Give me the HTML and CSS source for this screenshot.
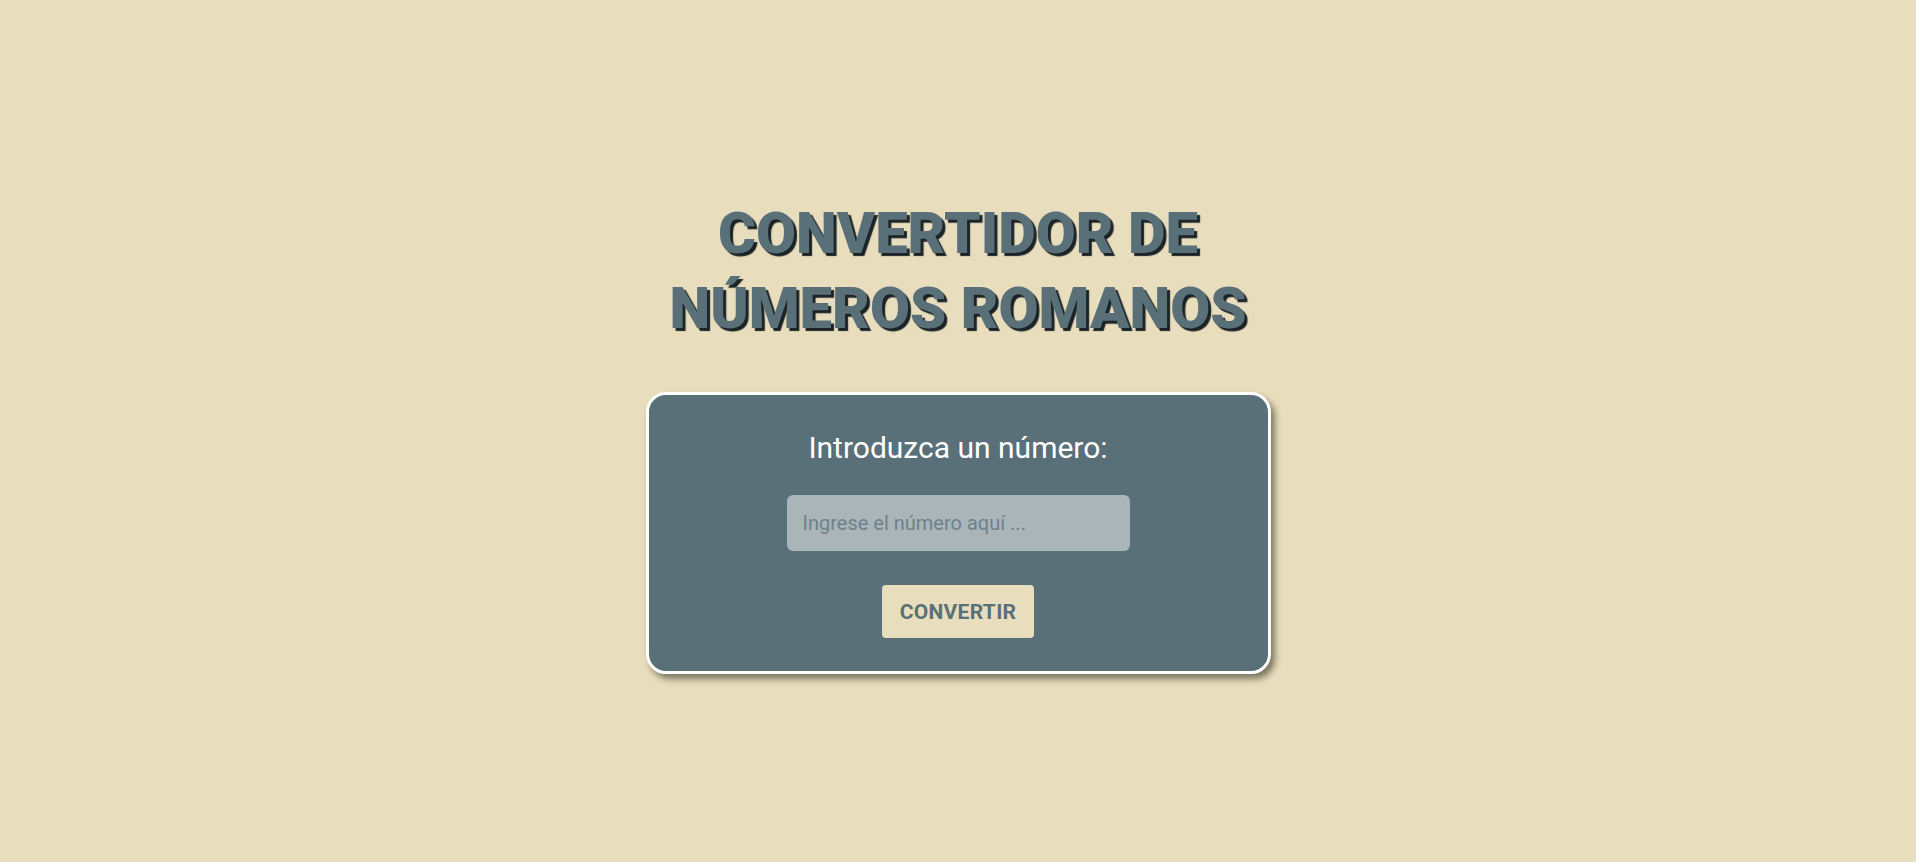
FILE: index.html
```html
<!DOCTYPE html>
<html lang="es">
<head>
<meta charset="utf-8">
<title>Convertidor de números romanos</title>
<link rel="stylesheet" href="styles.css">
</head>
<body>
<main class="page">
  <h1 class="title">CONVERTIDOR DE<br>NÚMEROS ROMANOS</h1>
  <form class="card">
    <label class="label" for="num">Introduzca un número:</label>
    <input class="field" id="num" type="text" placeholder="Ingrese el número aquí ...">
    <button class="btn" type="button">CONVERTIR</button>
  </form>
</main>
</body>
</html>
```
FILE: styles.css
```css
* { box-sizing: border-box; }
html, body { margin: 0; padding: 0; }
body {
  background: #e8ddbc;
  font-family: Roboto, "Liberation Sans", sans-serif;
}
.page {
  min-height: 100vh;
  display: flex;
  flex-direction: column;
  align-items: center;
  justify-content: center;
  padding-top: 8px;
}
.title {
  margin: 0 0 46px;
  font-family: Roboto, "Liberation Sans", sans-serif;
  font-weight: 900;
  font-size: 58px;
  line-height: 75px;
  letter-spacing: 0px;
  text-align: center;
  color: #5a7078;
  text-shadow: 3px 3px 1px #1b2326;
}
.card {
  width: 625px;
  background: #5a7078;
  border: 3px solid #ffffff;
  border-radius: 20px;
  box-shadow: 4px 5px 6px rgba(40, 40, 30, 0.55);
  display: flex;
  flex-direction: column;
  align-items: center;
  padding: 36px 20px 33px;
}
.label {
  color: #ffffff;
  font-size: 30px;
  font-weight: 400;
  line-height: 34px;
  margin-bottom: 30px;
}
.field {
  width: 343px;
  height: 56px;
  border: none;
  border-radius: 6px;
  background: #aab5ba;
  padding: 0 16px;
  font-family: Roboto, "Liberation Sans", sans-serif;
  font-size: 20px;
  color: #33444b;
  outline: none;
  margin-bottom: 34px;
}
.field::placeholder { color: #6f8189; }
.btn {
  width: 152px;
  height: 53px;
  border: none;
  border-radius: 4px;
  background: #e8ddbc;
  color: #5a7078;
  font-family: Roboto, "Liberation Sans", sans-serif;
  font-size: 21px;
  font-weight: 700;
  letter-spacing: 0.3px;
  padding: 0;
}
```
